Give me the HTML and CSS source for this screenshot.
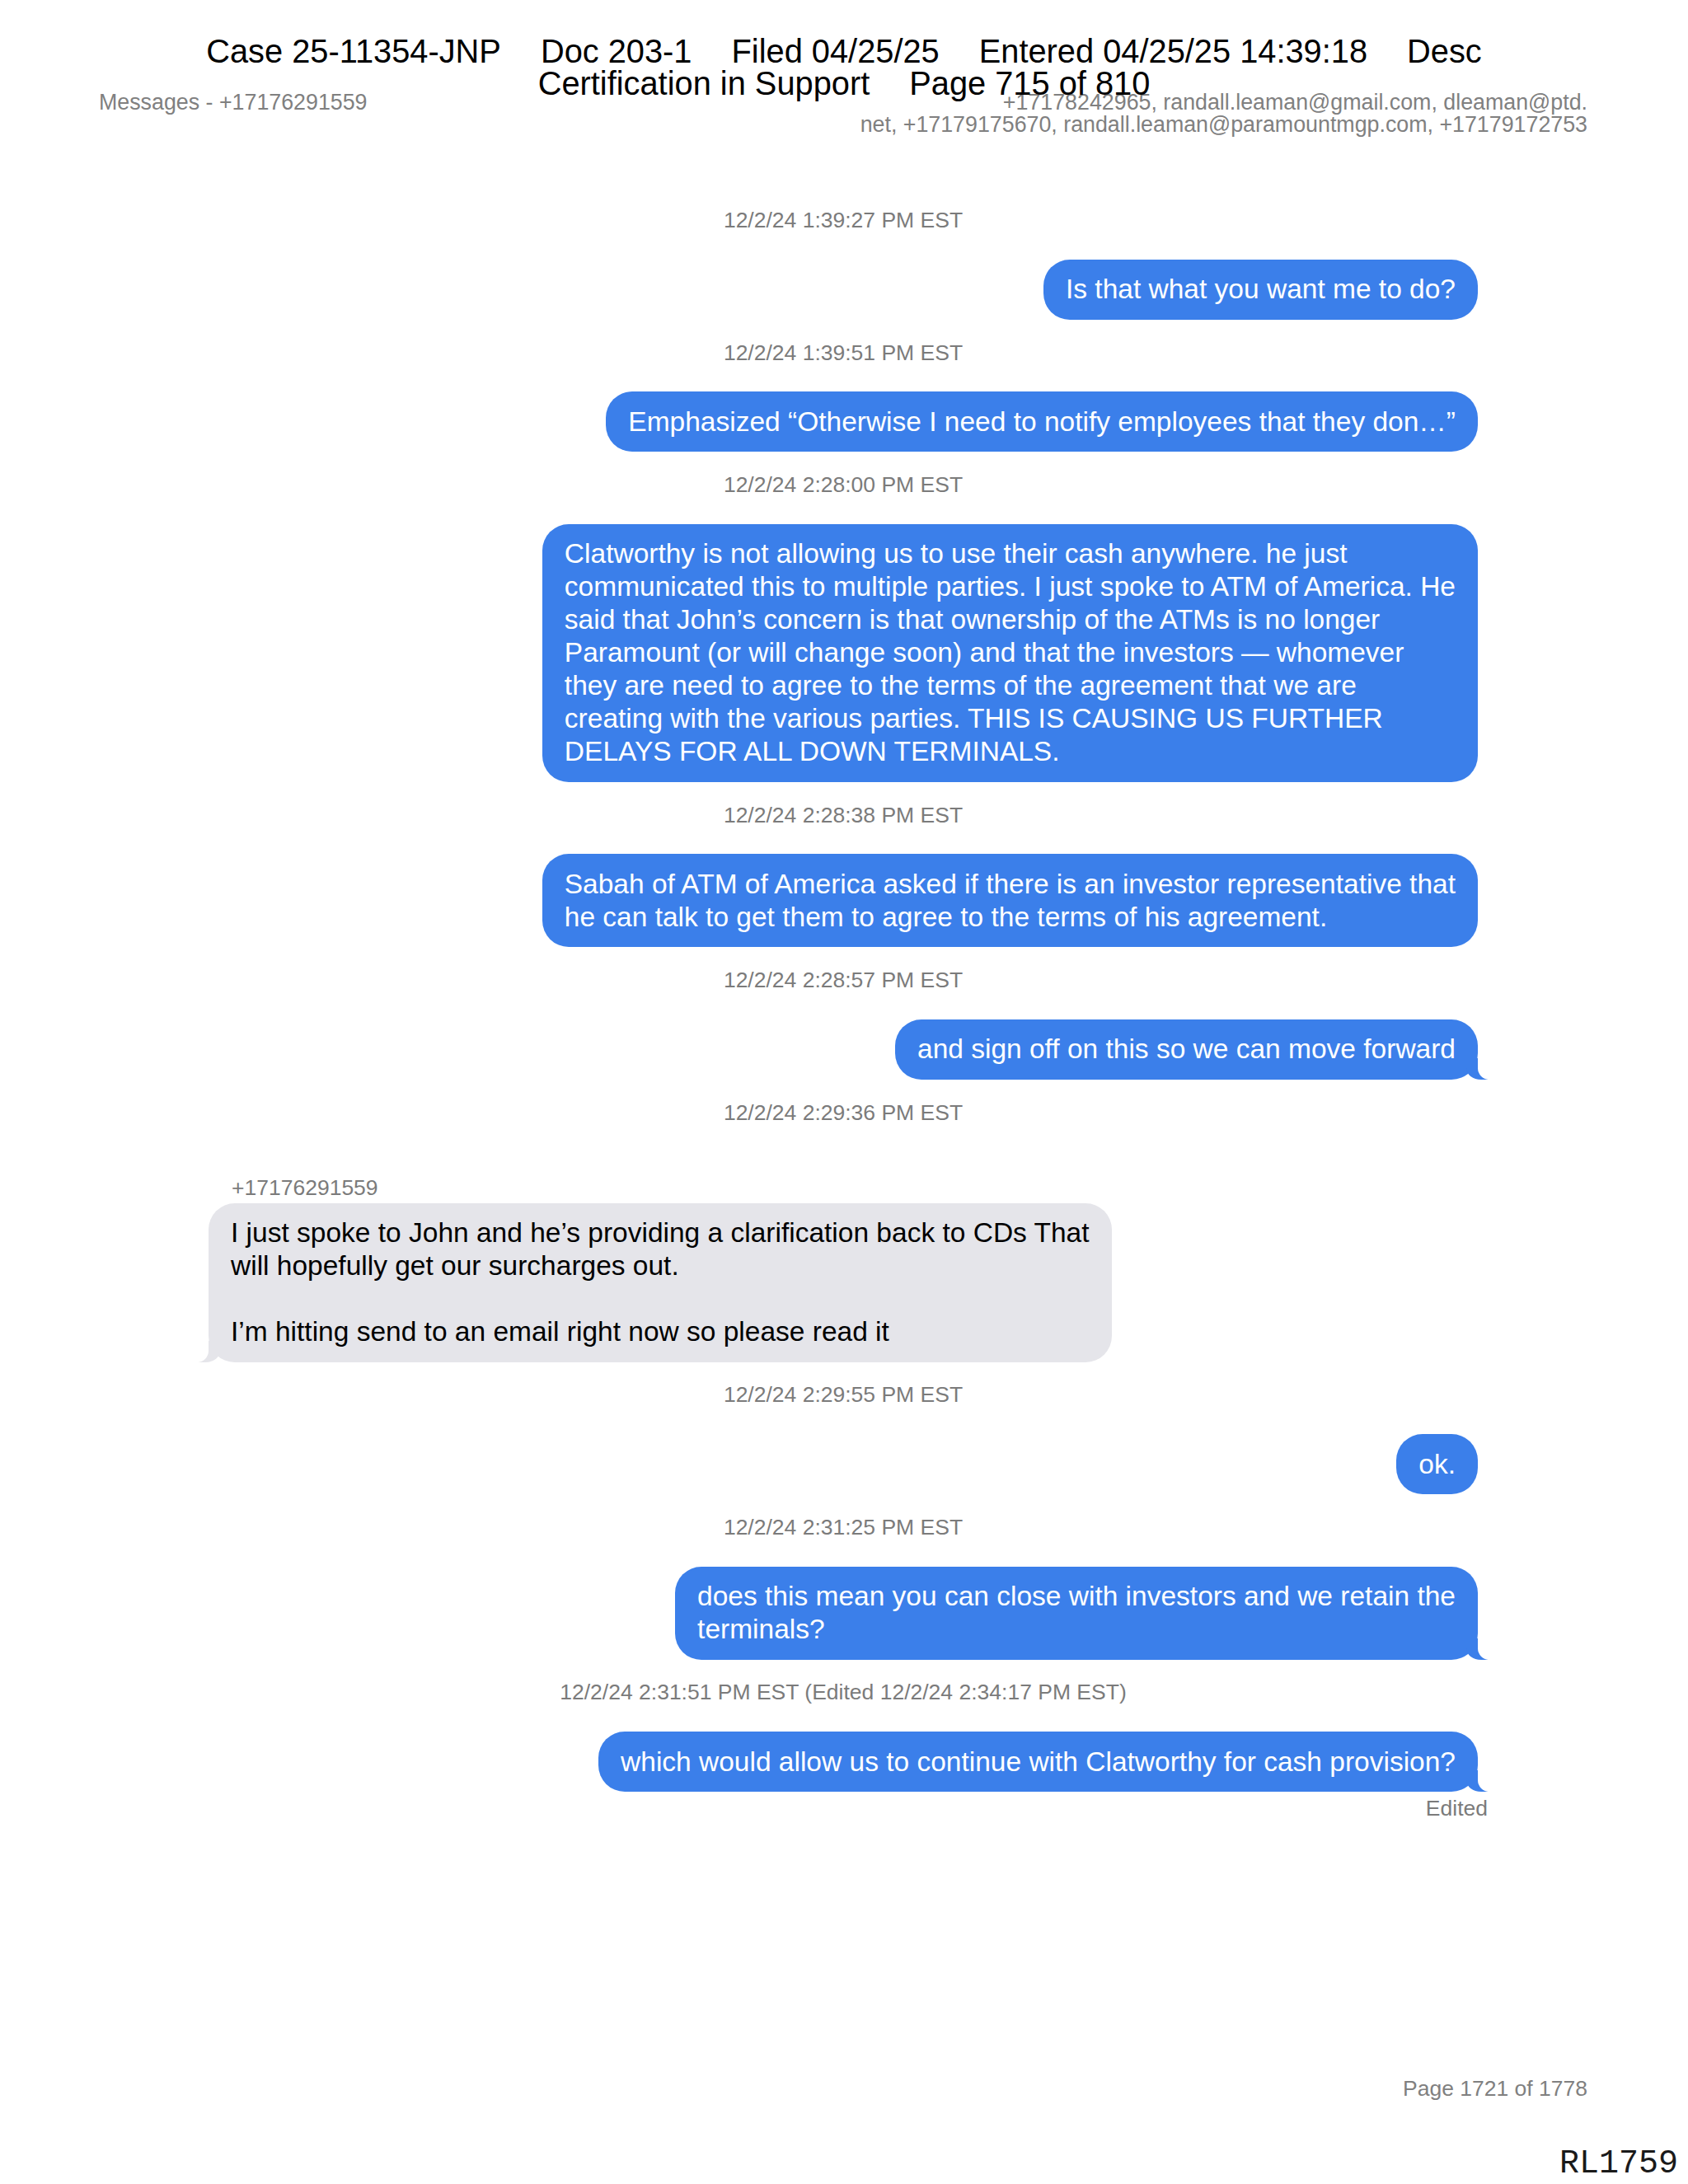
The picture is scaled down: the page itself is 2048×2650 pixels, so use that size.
FILE: index.html
```html
<!DOCTYPE html>
<html>
<head>
<meta charset="utf-8">
<title>Messages - +17176291559</title>
<link rel="stylesheet" href="styles.css">
</head>
<body>
<div class="page">
  <div class="topbar">
    <div class="title">Messages - +17176291559</div>
    <div class="participants">+17178242965, randall.leaman@gmail.com, dleaman@ptd.<br>net, +17179175670, randall.leaman@paramountmgp.com, +17179172753</div>
  </div>

  <div class="thread">
    <div class="ts first">12/2/24 1:39:27 PM EST</div>
    <div class="row out"><div class="bubble">Is that what you want me to do?</div></div>

    <div class="ts">12/2/24 1:39:51 PM EST</div>
    <div class="row out"><div class="bubble">Emphasized “Otherwise I need to notify employees that they don…”</div></div>

    <div class="ts">12/2/24 2:28:00 PM EST</div>
    <div class="row out"><div class="bubble">Clatworthy is not allowing us to use their cash anywhere. he just<br>communicated this to multiple parties. I just spoke to ATM of America. He<br>said that John’s concern is that ownership of the ATMs is no longer<br>Paramount (or will change soon) and that the investors — whomever<br>they are need to agree to the terms of the agreement that we are<br>creating with the various parties. THIS IS CAUSING US FURTHER<br>DELAYS FOR ALL DOWN TERMINALS.</div></div>

    <div class="ts">12/2/24 2:28:38 PM EST</div>
    <div class="row out"><div class="bubble">Sabah of ATM of America asked if there is an investor representative that<br>he can talk to get them to agree to the terms of his agreement.</div></div>

    <div class="ts">12/2/24 2:28:57 PM EST</div>
    <div class="row out"><div class="bubble tail">and sign off on this so we can move forward</div></div>

    <div class="ts">12/2/24 2:29:36 PM EST</div>
    <div class="incoming">
      <div class="sender">+17176291559</div>
      <div class="row in"><div class="bubble tail">I just spoke to John and he’s providing a clarification back to CDs That<br>will hopefully get our surcharges out.<br><br>I’m hitting send to an email right now so please read it</div></div>
    </div>

    <div class="ts">12/2/24 2:29:55 PM EST</div>
    <div class="row out"><div class="bubble">ok.</div></div>

    <div class="ts">12/2/24 2:31:25 PM EST</div>
    <div class="row out"><div class="bubble tail">does this mean you can close with investors and we retain the<br>terminals?</div></div>

    <div class="ts">12/2/24 2:31:51 PM EST (Edited 12/2/24 2:34:17 PM EST)</div>
    <div class="row out"><div class="bubble tail">which would allow us to continue with Clatworthy for cash provision?</div></div>
    <div class="edited">Edited</div>
  </div>

  <div class="footer">Page 1721 of 1778</div>
</div>

<div class="stamp">
  <div class="stamp-line"><span>Case 25-11354-JNP</span><span>Doc 203-1</span><span>Filed 04/25/25</span><span>Entered 04/25/25 14:39:18</span><span>Desc</span></div>
  <div class="stamp-line"><span>Certification in Support</span><span>Page 715 of 810</span></div>
</div>
<div class="bates">RL1759</div>
</body>
</html>
```

FILE: styles.css
```css
html, body {
  margin: 0;
  padding: 0;
  background: #ffffff;
}

body {
  position: relative;
  width: 2048px;
  height: 2650px;
  overflow: hidden;
  font-family: "Liberation Sans", Arial, sans-serif;
}

.page {
  box-sizing: border-box;
  height: 2650px;
  padding: 111px 122px 0 120px;
  display: flex;
  flex-direction: column;
}

.topbar {
  display: flex;
  justify-content: space-between;
  align-items: flex-start;
  font-size: 26.8px;
  line-height: 27px;
  color: #808080;
}

.participants {
  text-align: right;
}

.thread {
  padding: 0 133px;
  display: flex;
  flex-direction: column;
}

.ts {
  margin-top: 24.75px;
  font-size: 26.5px;
  line-height: 30px;
  color: #7b7b7b;
  text-align: center;
}

.ts.first {
  margin-top: 87px;
}

.row {
  display: flex;
  margin-top: 32.75px;
}

.row.out {
  justify-content: flex-end;
}

.row.in {
  justify-content: flex-start;
}

.bubble {
  position: relative;
  box-sizing: border-box;
  max-width: 1180px;
  padding: 16.5px 27px;
  border-radius: 32px;
  font-size: 33.5px;
  line-height: 40px;
}

.out .bubble {
  background: #3b7fea;
  color: #ffffff;
}

.in .bubble {
  background: #e5e5ea;
  color: #000000;
}

/* message tails */
.out .bubble.tail::before {
  content: "";
  position: absolute;
  bottom: 0;
  right: -12px;
  width: 26px;
  height: 26px;
  background: #3b7fea;
  border-bottom-left-radius: 18px 14px;
}

.out .bubble.tail::after {
  content: "";
  position: absolute;
  bottom: 0;
  right: -36px;
  width: 36px;
  height: 26px;
  background: #ffffff;
  border-bottom-left-radius: 14px;
}

.in .bubble.tail::before {
  content: "";
  position: absolute;
  bottom: 0;
  left: -12px;
  width: 26px;
  height: 26px;
  background: #e5e5ea;
  border-bottom-right-radius: 18px 14px;
}

.in .bubble.tail::after {
  content: "";
  position: absolute;
  bottom: 0;
  left: -36px;
  width: 36px;
  height: 26px;
  background: #ffffff;
  border-bottom-right-radius: 14px;
}

.sender {
  margin-top: 61px;
  padding-left: 28px;
  font-size: 26.5px;
  line-height: 30px;
  color: #7b7b7b;
}

.incoming .row {
  margin-top: 4px;
}

.edited {
  margin-top: 5px;
  margin-right: -12px;
  text-align: right;
  font-size: 26.5px;
  line-height: 30px;
  color: #7b7b7b;
}

.footer {
  margin-top: auto;
  margin-bottom: 101px;
  text-align: right;
  font-size: 26.5px;
  line-height: 30px;
  color: #808080;
}

.stamp {
  position: absolute;
  top: 43px;
  left: 0;
  width: 2048px;
  text-align: center;
  font-size: 39.8px;
  line-height: 39px;
  color: #000000;
}

.stamp-line span + span {
  margin-left: 48px;
}

.bates {
  position: absolute;
  right: 12px;
  top: 2603px;
  font-family: "Liberation Mono", "Courier New", monospace;
  font-size: 40px;
  line-height: 46px;
  color: #1a1a1a;
}
```
